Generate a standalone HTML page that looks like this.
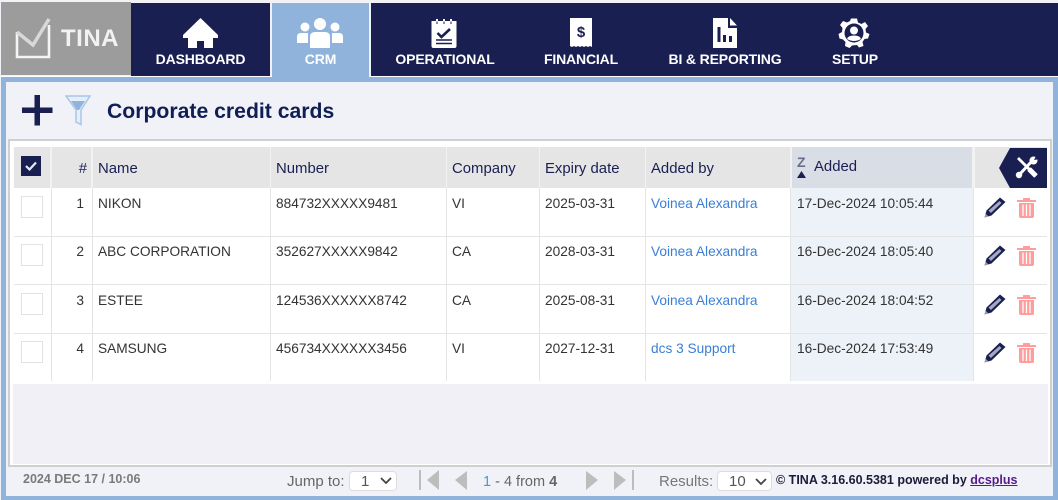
<!DOCTYPE html>
<html><head><meta charset="utf-8"><title>TINA</title>
<style>
*{box-sizing:border-box}
html,body{margin:0;padding:0;width:1058px;height:500px;overflow:hidden;background:#f0f2f7;font-family:"Liberation Sans",sans-serif;color:#333}
.a{position:absolute}
.t{position:absolute;white-space:nowrap}
.nav{position:absolute;top:3px;height:73px;background:#1a1f52}
.lbl{position:absolute;top:51px;color:#fff;font-weight:bold;font-size:14px;line-height:16px;text-align:center;white-space:nowrap;letter-spacing:-.15px}
.h{position:absolute;top:147px;height:41px;background:#e5e5e5}
.ht{position:absolute;top:161px;font-size:14.9px;line-height:16px;color:#1a1f52;white-space:nowrap}
.c{position:absolute;font-size:13.7px;line-height:16px;color:#333;white-space:nowrap}
.lnk{color:#3a7fd5}
.vl{position:absolute;width:1px;background:#e4e4e4;top:188px;height:193px}
.hl{position:absolute;left:14px;width:1033px;height:1px;background:#e4e4e4}
.cb{position:absolute;left:21px;width:22px;height:22px;background:#fff;border:1px solid #e2e2e2}
.sel{position:absolute;height:20px;background:#fff;border:1px solid #ddd;border-radius:4px;font-size:15px;line-height:19px;color:#555;}
.f{position:absolute;font-size:15px;line-height:16px;color:#666;white-space:nowrap}
</style></head><body>

<!-- frame -->
<div class="a" style="left:0;top:0;width:1058px;height:3px;background:#f3f3f7"></div>
<div class="a" style="left:1px;top:76px;width:1057px;height:1px;background:#fff"></div>
<div class="a" style="left:1px;top:77px;width:1057px;height:5px;background:#8fb3db"></div>
<div class="a" style="left:1px;top:77px;width:5px;height:423px;background:#8fb3db"></div>
<div class="a" style="left:1053px;top:77px;width:5px;height:423px;background:#8fb3db"></div>
<div class="a" style="left:1px;top:496px;width:1057px;height:4px;background:#8fb3db"></div>

<!-- logo -->
<div class="a" style="left:1px;top:2px;width:130px;height:73px;background:#9c9c9c"></div>
<svg class="a" style="left:14px;top:16px" width="38" height="44" viewBox="0 0 38 44">
<path d="M3 16V41H35V9" fill="none" stroke="#f4f4f4" stroke-width="2.600"/>
<path d="M3 16L19 29L35 3" fill="none" stroke="#d8d8d8" stroke-width="3.500"/>
</svg>
<div class="t" style="left:61px;top:26px;font-size:24px;line-height:26px;font-weight:bold;color:#f2f2f2;letter-spacing:.5px">TINA</div>

<!-- nav -->
<div class="nav" style="left:131px;width:139px"></div>
<div class="a" style="left:272px;top:3px;width:97px;height:79px;background:#8fb3db"></div>
<div class="nav" style="left:371px;width:687px"></div>

<svg class="a" style="left:183px;top:18px" width="35" height="30" viewBox="0 0 35 30"><path d="M17.500 0L35 17V20H30V30H21V23H14V30H5V20H0V17Z" fill="#fff"/></svg>
<div class="lbl" style="left:131px;width:139px">DASHBOARD</div>

<svg class="a" style="left:297px;top:17px" width="47" height="31" viewBox="0 0 47 31" fill="#fff">
<circle cx="23" cy="7" r="6"/><circle cx="8" cy="10" r="4.500"/><circle cx="38" cy="10" r="4.500"/>
<path d="M13 31V20Q13 15 18 15H28Q33 15 33 20V31Z"/>
<path d="M0 26V20Q0 16 4 16H11Q11 18 11 20V26Z"/><path d="M46 26V20Q46 16 42 16H35Q35 18 35 20V26Z"/></svg>
<div class="lbl" style="left:272px;width:97px">CRM</div>

<svg class="a" style="left:430px;top:18px" width="28" height="30" viewBox="0 0 28 30">
<path d="M1.500 3H26.500V28Q26.500 30 24.500 30H3.500Q1.500 30 1.500 28Z" fill="#fff"/>
<path d="M7 1V6M14 1V6M21 1V6" stroke="#fff" stroke-width="2"/>
<path d="M7 3.500V6M14 3.500V6M21 3.500V6" stroke="#1a1f52" stroke-width="1"/>
<path d="M7.500 15L11.500 19L20 11" fill="none" stroke="#1a1f52" stroke-width="2.600"/>
<path d="M6 22H22M6 25.500H22" stroke="#1a1f52" stroke-width="1.500"/></svg>
<div class="lbl" style="left:371px;width:148px">OPERATIONAL</div>

<svg class="a" style="left:570px;top:18px" width="22" height="30" viewBox="0 0 22 30">
<path d="M0 0H22V29L20 28 18 29 16 28 14 29 12 28 10 29 8 28 6 29 4 28 2 29 0 28Z" fill="#fff"/>
<text x="11" y="19" font-family="Liberation Sans" font-size="15" font-weight="bold" fill="#1a1f52" text-anchor="middle">$</text></svg>
<div class="lbl" style="left:519px;width:124px">FINANCIAL</div>

<svg class="a" style="left:713px;top:18px" width="24" height="30" viewBox="0 0 24 30">
<path d="M0 0H15V10H24V30H0Z" fill="#fff"/>
<path d="M17 0L24 7.500H17Z" fill="#fff"/>
<path d="M6 9V24M11.500 17V24M17.500 18V24" stroke="#1a1f52" stroke-width="3"/></svg>
<div class="lbl" style="left:641px;width:168px">BI &amp; REPORTING</div>

<svg class="a" style="left:838px;top:17px" width="32" height="32" viewBox="0 0 32 32">
<path d="M13 1.500L19 1.500 20 5.500 23.500 7 27 5 30 9 27.500 12 28 15.500 31.500 17 30 21.500 26.500 22 24.500 25 25.500 29 21 30.500 19 28 14 28.500 11.500 31 7 29 7.500 25 5 22.500 1.500 21.500 0.500 17 4 15 4.500 11 2 8 5 4 9 5.500 12 4Z" fill="#fff"/>
<circle cx="16" cy="16" r="9.500" fill="#1a1f52"/>
<circle cx="16" cy="13.500" r="4" fill="#fff"/><path d="M9 22Q10 18.500 16 18.500Q22 18.500 23 22Q16 26 9 22Z" fill="#fff"/></svg>
<div class="lbl" style="left:811px;width:88px">SETUP</div>

<!-- title bar -->
<svg class="a" style="left:22px;top:95px" width="31" height="31" viewBox="0 0 31 31"><path d="M12.500 0H18V12.500H30.500V18H18V30.500H12.500V18H0V12.500H12.500Z" fill="#1a1f52"/></svg>
<svg class="a" style="left:65px;top:95px" width="26" height="31" viewBox="0 0 26 31">
<path d="M1 1H25L16 15V29.500L11 27V15Z" fill="#e6eef8" stroke="#a9c6e8" stroke-width="1.500"/>
<path d="M6 6H20L14 15H12Z" fill="#8fb3db"/></svg>
<div class="t" style="left:107px;top:100px;font-size:21.2px;line-height:24px;font-weight:bold;color:#0f1f55">Corporate credit cards</div>

<!-- panel -->
<div class="a" style="left:8px;top:139px;width:1044px;height:328px;border:2px solid #cfcfcf;background:#f0f0f6"></div>
<div class="a" style="left:10px;top:141px;width:1040px;height:324px;border:1px solid #fff;border-right-width:2px;border-left-width:3px;background:#f0f0f6"></div>
<div class="a" style="left:13px;top:142px;width:1035px;height:242px;background:#fff"></div>

<!-- header -->
<div class="a" style="left:14px;top:147px;width:1033px;height:41px;background:#f2f2f2"></div>
<div class="h" style="left:14px;width:36px"></div>
<div class="h" style="left:52px;width:39px"></div>
<div class="h" style="left:93px;width:177px"></div>
<div class="h" style="left:271px;width:175px"></div>
<div class="h" style="left:447px;width:92px"></div>
<div class="h" style="left:540px;width:105px"></div>
<div class="h" style="left:646px;width:144px"></div>
<div class="h" style="left:792px;width:180px;background:#d9dee6"></div>
<div class="h" style="left:975px;width:72px"></div>
<div class="a" style="left:21px;top:156px;width:20px;height:20px;background:#1a1f52"></div>
<svg class="a" style="left:25px;top:161px" width="12" height="10" viewBox="0 0 12 10"><path d="M1 5L4.500 8.500L11 1.500" fill="none" stroke="#e8e8ee" stroke-width="2.200"/></svg>
<div class="ht" style="left:52px;width:35px;text-align:right">#</div>
<div class="ht" style="left:98px">Name</div>
<div class="ht" style="left:276px">Number</div>
<div class="ht" style="left:452px">Company</div>
<div class="ht" style="left:545px">Expiry date</div>
<div class="ht" style="left:651px">Added by</div>
<div class="ht" style="left:814px;top:159px">Added</div>
<div class="t" style="left:797px;top:155px;font-size:14px;line-height:14px;font-weight:bold;color:#6a6e8c">Z</div>
<svg class="a" style="left:797px;top:171px" width="9" height="7"><path d="M0 7L4.500 0L9 7Z" fill="#1a1f52"/></svg>
<svg class="a" style="left:999px;top:148px" width="48" height="40" viewBox="0 0 48 40"><path d="M11 0H48V40H11L0 20Z" fill="#1a1f52"/>
<path d="M19 10L37 28" stroke="#fff" stroke-width="2.800"/><path d="M30 21L37 28" stroke="#fff" stroke-width="5"/>
<path d="M34 12L20 27" stroke="#fff" stroke-width="3"/>
<circle cx="20" cy="27" r="3.200" fill="#fff"/><circle cx="34.500" cy="12.500" r="4" fill="#fff"/><path d="M35 12L38 6L41 11Z" fill="#1a1f52"/></svg>

<!-- added col bg + lines -->
<div class="a" style="left:791px;top:188px;width:182px;height:193px;background:#edf2f9"></div>
<div class="vl" style="left:51px"></div><div class="vl" style="left:92px"></div><div class="vl" style="left:270px"></div>
<div class="vl" style="left:446px"></div><div class="vl" style="left:539px"></div><div class="vl" style="left:645px"></div>
<div class="vl" style="left:790px"></div><div class="vl" style="left:973px"></div>
<div class="hl" style="top:236px"></div><div class="hl" style="top:284px"></div><div class="hl" style="top:333px"></div>

<!-- rows -->
<div class="cb" style="top:196px"></div><div class="cb" style="top:244px"></div><div class="cb" style="top:293px"></div><div class="cb" style="top:341px"></div>

<div class="c" style="left:52px;width:32px;text-align:right;top:196px">1</div>
<div class="c" style="left:98px;top:196px">NIKON</div><div class="c" style="left:276px;top:196px">884732XXXXX9481</div><div class="c" style="left:452px;top:196px">VI</div><div class="c" style="left:545px;top:196px">2025-03-31</div><div class="c lnk" style="left:651px;top:196px">Voinea Alexandra</div><div class="c" style="left:797px;top:196px">17-Dec-2024 10:05:44</div>

<div class="c" style="left:52px;width:32px;text-align:right;top:244px">2</div>
<div class="c" style="left:98px;top:244px">ABC CORPORATION</div><div class="c" style="left:276px;top:244px">352627XXXXX9842</div><div class="c" style="left:452px;top:244px">CA</div><div class="c" style="left:545px;top:244px">2028-03-31</div><div class="c lnk" style="left:651px;top:244px">Voinea Alexandra</div><div class="c" style="left:797px;top:244px">16-Dec-2024 18:05:40</div>

<div class="c" style="left:52px;width:32px;text-align:right;top:293px">3</div>
<div class="c" style="left:98px;top:293px">ESTEE</div><div class="c" style="left:276px;top:293px">124536XXXXXX8742</div><div class="c" style="left:452px;top:293px">CA</div><div class="c" style="left:545px;top:293px">2025-08-31</div><div class="c lnk" style="left:651px;top:293px">Voinea Alexandra</div><div class="c" style="left:797px;top:293px">16-Dec-2024 18:04:52</div>

<div class="c" style="left:52px;width:32px;text-align:right;top:341px">4</div>
<div class="c" style="left:98px;top:341px">SAMSUNG</div><div class="c" style="left:276px;top:341px">456734XXXXXX3456</div><div class="c" style="left:452px;top:341px">VI</div><div class="c" style="left:545px;top:341px">2027-12-31</div><div class="c lnk" style="left:651px;top:341px">dcs 3 Support</div><div class="c" style="left:797px;top:341px">16-Dec-2024 17:53:49</div>

<!-- action icons -->
<svg width="0" height="0" style="position:absolute"><defs>
<symbol id="pen" viewBox="0 0 22 21"><path d="M16 0.500L21.500 5 7.500 18.500 0.500 20.500 2.500 13.500Z" fill="#1a1f52"/><path d="M4.500 13.500L15.500 4 17.500 6 7 16Z" fill="#c8cadb" opacity=".8"/><path d="M0.500 20.500L1.500 16.500 4.500 19.500Z" fill="#9a9cb5"/></symbol>
<symbol id="bin" viewBox="0 0 19 21"><path d="M0 3H19V5H0ZM6 1H13V3H6Z" fill="#ff9c9c"/><path d="M2 6H17V19Q17 21 15 21H4Q2 21 2 19Z" fill="#ff9c9c"/><path d="M6 7.500V19M9.500 7.500V19M13 7.500V19" stroke="#fff" stroke-width="1.300"/></symbol>
</defs></svg>
<svg class="a" style="left:984px;top:197px" width="22" height="21"><use href="#pen"/></svg><svg class="a" style="left:1017px;top:197px" width="19" height="21"><use href="#bin"/></svg>
<svg class="a" style="left:984px;top:245px" width="22" height="21"><use href="#pen"/></svg><svg class="a" style="left:1017px;top:245px" width="19" height="21"><use href="#bin"/></svg>
<svg class="a" style="left:984px;top:294px" width="22" height="21"><use href="#pen"/></svg><svg class="a" style="left:1017px;top:294px" width="19" height="21"><use href="#bin"/></svg>
<svg class="a" style="left:984px;top:342px" width="22" height="21"><use href="#pen"/></svg><svg class="a" style="left:1017px;top:342px" width="19" height="21"><use href="#bin"/></svg>

<!-- footer -->
<div class="f" style="left:23px;top:471px;font-size:12.5px;font-weight:bold;color:#7a7a7a">2024 DEC 17 / 10:06</div>
<div class="f" style="left:287px;top:474px">Jump to:</div>
<div class="sel" style="left:349px;top:471px;width:48px"><span style="position:absolute;left:11px;top:0">1</span><svg style="position:absolute;left:30px;top:5px" width="12" height="8"><path d="M1 1L6 6L11 1" fill="none" stroke="#444" stroke-width="1.800"/></svg></div>
<svg class="a" style="left:419px;top:470px" width="56" height="20" fill="#bdbdbd"><rect x="0" y="0" width="2" height="20"/><path d="M20 0V20L8 10Z"/><path d="M48 1V20L36 10Z"/></svg>
<div class="f" style="left:483px;top:474px;font-size:14.500px"><span style="color:#4a9bc9">1</span> - 4 from <b>4</b></div>
<svg class="a" style="left:586px;top:470px" width="50" height="20" fill="#bdbdbd"><path d="M0 1V20L12 10Z"/><path d="M28 1V20L40 10Z"/><rect x="46" y="0" width="2" height="20"/></svg>
<div class="f" style="left:659px;top:474px;color:#777">Results:</div>
<div class="sel" style="left:717px;top:471px;width:55px"><span style="position:absolute;left:11px;top:0">10</span><svg style="position:absolute;left:37px;top:6px" width="12" height="8"><path d="M1 1L6 6L11 1" fill="none" stroke="#444" stroke-width="1.800"/></svg></div>
<div class="t" style="left:776px;top:472px;font-size:12.5px;line-height:16px;font-weight:bold;color:#1b1b3a">© TINA 3.16.60.5381 powered by <span style="color:#551a8b;text-decoration:underline">dcsplus</span></div>
</body></html>
